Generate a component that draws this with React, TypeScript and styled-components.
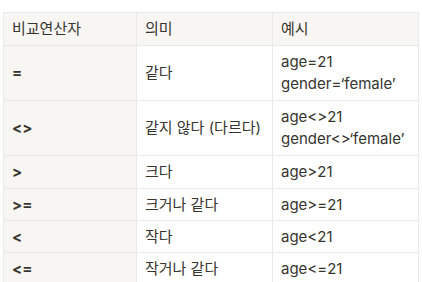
import React from 'react';
import styled, { createGlobalStyle } from 'styled-components';

const GlobalStyle = createGlobalStyle`
  body {
    margin: 0;
    background: #ffffff;
    font-family: Inter, "Noto Sans CJK KR", "Noto Sans", sans-serif;
    color: #37352f;
  }
`;

const Page = styled.div`
  padding: 12px 0 0 3px;
`;

const Table = styled.table`
  border-collapse: collapse;
  table-layout: fixed;
  width: 415px;
  font-size: 15px;
`;

const HeadCell = styled.th<{ $w: number }>`
  box-sizing: border-box;
  width: ${(p) => p.$w}px;
  background: #f7f6f3;
  border: 1px solid #e9e9e7;
  padding: 5px 8px;
  text-align: left;
  font-weight: 400;
  vertical-align: middle;
`;

const Cell = styled.td<{ $first?: boolean; $tight?: boolean }>`
  box-sizing: border-box;
  border: 1px solid #e9e9e7;
  padding: ${(p) => (p.$tight ? '5px 8px 4px' : '5px 8px')};
  vertical-align: middle;
  background: ${(p) => (p.$first ? '#f7f6f3' : '#ffffff')};
  font-weight: ${(p) => (p.$first ? 700 : 400)};
  white-space: nowrap;
`;

const Line = styled.div`
  height: 22px;
  line-height: 22px;
`;

interface Row {
  op: string;
  meaning: string;
  examples: string[];
  tight?: boolean;
}

const rows: Row[] = [
  { op: '=', meaning: '같다', examples: ['age=21', 'gender=\u2018female\u2019'] },
  { op: '<>', meaning: '같지 않다 (다르다)', examples: ['age<>21', 'gender<>\u2018female\u2019'] },
  { op: '>', meaning: '크다', examples: ['age>21'] },
  { op: '>=', meaning: '크거나 같다', examples: ['age>=21'], tight: true },
  { op: '<', meaning: '작다', examples: ['age<21'], tight: true },
  { op: '<=', meaning: '작거나 같다', examples: ['age<=21'], tight: true },
];

export default function App() {
  return (
    <Page>
      <GlobalStyle />
      <Table>
        <thead>
          <tr>
            <HeadCell $w={133}>
              <Line>비교연산자</Line>
            </HeadCell>
            <HeadCell $w={136}>
              <Line>의미</Line>
            </HeadCell>
            <HeadCell $w={146}>
              <Line>예시</Line>
            </HeadCell>
          </tr>
        </thead>
        <tbody>
          {rows.map((r) => (
            <tr key={r.op}>
              <Cell $first $tight={r.tight}>
                <Line>{r.op}</Line>
              </Cell>
              <Cell $tight={r.tight}>
                <Line>{r.meaning}</Line>
              </Cell>
              <Cell $tight={r.tight}>
                {r.examples.map((e) => (
                  <Line key={e}>{e}</Line>
                ))}
              </Cell>
            </tr>
          ))}
        </tbody>
      </Table>
    </Page>
  );
}
